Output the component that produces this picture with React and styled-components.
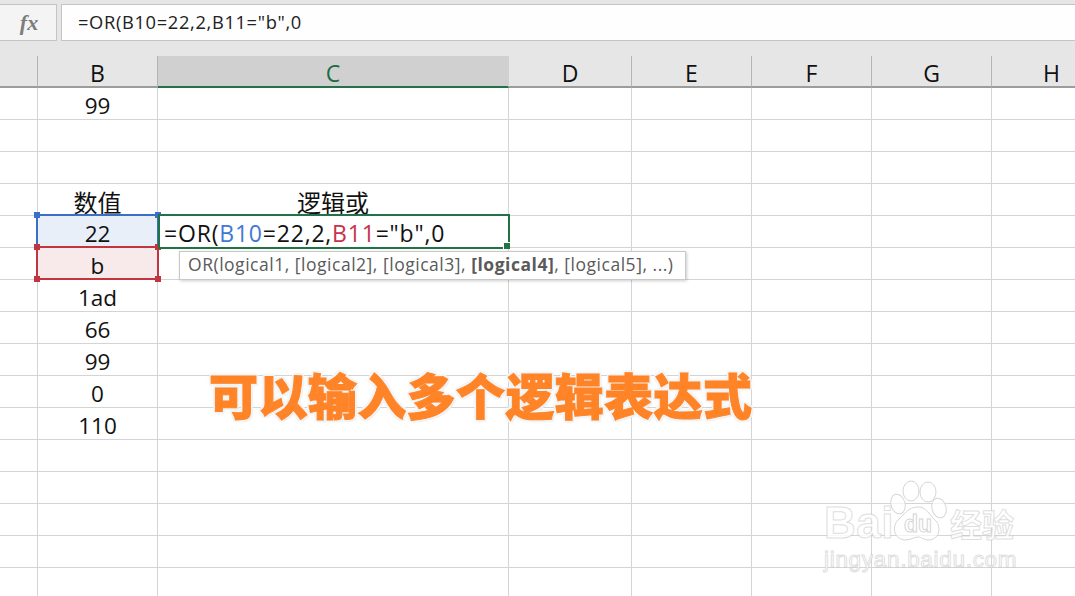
import styled, { createGlobalStyle } from 'styled-components'

const GlobalStyle = createGlobalStyle`
  html, body { margin: 0; padding: 0; background: #fff; overflow: hidden; }
  #root { width: 1075px; height: 596px; overflow: hidden; }
`

const cellFont = `"Open Sans", "Noto Sans CJK SC", sans-serif`
const cjkFont = `"Noto Sans CJK SC", sans-serif`

const Page = styled.div`
  width: 1075px;
  height: 596px;
  display: flex;
  flex-direction: column;
  overflow: hidden;
  font-family: ${cellFont};
  color: #111;
`

const FormulaBar = styled.div`
  height: 56px;
  flex: none;
  box-sizing: border-box;
  padding-top: 4px;
  display: flex;
  align-items: flex-start;
  gap: 4px;
  background: #e6e6e6;
`

const FxBox = styled.div`
  width: 57px;
  height: 37px;
  box-sizing: border-box;
  background: #f4f4f4;
  border: 1px solid #c4c4c4;
  border-left: 0;
  padding-left: 2px;
  display: flex;
  align-items: center;
  justify-content: center;
  font: italic 700 22px "Liberation Serif", serif;
  color: #7c7c7c;
`

const FormulaInput = styled.div`
  flex: 1;
  height: 37px;
  box-sizing: border-box;
  background: #fefefe;
  border: 1px solid #c4c4c4;
  border-right: 0;
  padding-left: 16px;
  line-height: 34px;
  font-size: 18.3px;
  letter-spacing: 0.66px;
  color: #222;
`

const Sheet = styled.div`
  position: relative;
  flex: 1;
  display: grid;
  grid-template-columns: 38px 120px 351px 123px 120px 120px 120px 120px;
  grid-auto-rows: 32px;
  background: #fff;
`

const Head = styled.div`
  box-sizing: border-box;
  background: ${p => (p.$active ? '#d0d0d0' : '#e6e6e6')};
  color: ${p => (p.$active ? '#1f6b45' : '#111')};
  border-bottom: ${p => (p.$active ? '2px solid #217346' : '2px solid #9c9c9c')};
  border-right: ${p => (p.$active ? '1px solid #d0d0d0' : '1px solid #b4b4b4')};
  font-size: 23px;
  line-height: 35px;
  text-align: center;
`

const Cell = styled.div`
  box-sizing: border-box;
  border-right: 1px solid #d4d4d4;
  border-bottom: 1px solid #d4d4d4;
  background: ${p => p.$fill || '#fff'};
  font-size: 22.5px;
  line-height: 35px;
  text-align: center;
  white-space: nowrap;
`

const CjkLabel = styled.span`
  font-family: ${cjkFont};
  font-size: 24px;
`

const RefBox = styled.div`
  position: absolute;
  left: 36px;
  width: 123px;
  top: ${p => p.$top}px;
  height: 34px;
  box-sizing: border-box;
  border: 2px solid ${p => p.$color};
`

const Handle = styled.i`
  position: absolute;
  width: 6px;
  height: 6px;
  background: ${p => p.$color};
  ${p => (p.$y === 'top' ? 'top: -4px;' : 'bottom: -4px;')}
  ${p => (p.$x === 'left' ? 'left: -4px;' : 'right: -4px;')}
`

const EditBox = styled.div`
  position: absolute;
  left: 158px;
  top: 158px;
  width: 352px;
  height: 35px;
  box-sizing: border-box;
  border: 2px solid #217346;
  background: #fff;
  padding-left: 4px;
  font-size: 23px;
  letter-spacing: 0.8px;
  line-height: 35px;
  white-space: nowrap;
`

const FillHandle = styled.i`
  position: absolute;
  right: -2px;
  bottom: -2px;
  width: 6px;
  height: 6px;
  background: #217346;
  border-left: 1px solid #fff;
  border-top: 1px solid #fff;
`

const Ref = styled.span`
  color: ${p => p.$color};
`

const Tooltip = styled.div`
  position: absolute;
  left: 179px;
  top: 195px;
  width: 507px;
  height: 29px;
  box-sizing: border-box;
  background: #fff;
  border: 1px solid #c8c8c8;
  box-shadow: 1px 1px 3px rgba(0, 0, 0, 0.2);
  padding-left: 8px;
  font-size: 17.5px;
  letter-spacing: 0.52px;
  line-height: 24px;
  color: #5a5a5a;
  white-space: nowrap;
`

const Caption = styled.div`
  position: absolute;
  left: 209px;
  top: 305px;
  font: 900 49px/66px ${cjkFont};
  letter-spacing: 0.4px;
  color: #ff8427;
  white-space: nowrap;
  -webkit-text-stroke: 1px #ff8427;
  text-shadow: 2px 0 0 #f4f4f4, -2px 0 0 #f4f4f4, 0 2px 0 #f4f4f4, 0 -2px 0 #f4f4f4,
    2px 2px 0 #eee, -2px 2px 0 #f4f4f4, 2px -2px 0 #f4f4f4, -2px -2px 0 #f4f4f4,
    0 0 4px rgba(0, 0, 0, 0.2);
`

const Watermark = styled.div`
  position: absolute;
  left: 824px;
  top: 424px;
  width: 196px;
  display: flex;
  flex-direction: column;
  gap: 7px;
`

const BrandRow = styled.div`
  display: flex;
  align-items: flex-end;
  height: 61px;
`

const outlined = `
  color: rgba(255, 255, 255, 0.85);
  -webkit-text-stroke: 1px rgba(200, 200, 200, 0.6);
`

const BrandLatin = styled.span`
  ${outlined}
  font: 700 44px/36px "Liberation Sans", sans-serif;
  letter-spacing: 0.5px;
`

const PawIcon = styled.svg`
  flex: none;
  width: 62px;
  height: 61px;
  margin-left: -6px;
`

const BrandCjk = styled.span`
  ${outlined}
  font: 700 32px/36px ${cjkFont};
`

const BrandUrl = styled.span`
  ${outlined}
  font: 400 22.5px/24px "Liberation Sans", sans-serif;
  letter-spacing: 0.7px;
  white-space: nowrap;
`

const columns = [
  { name: '', id: 'corner' },
  { name: 'B', id: 'b' },
  { name: 'C', id: 'c', active: true },
  { name: 'D', id: 'd' },
  { name: 'E', id: 'e' },
  { name: 'F', id: 'f' },
  { name: 'G', id: 'g' },
  { name: 'H', id: 'h' },
]

// column B and C values per sheet row, everything else is blank
const rows = [
  ['99', ''],
  ['', ''],
  ['', ''],
  [<CjkLabel>数值</CjkLabel>, <CjkLabel>逻辑或</CjkLabel>],
  ['22', ''],
  ['b', ''],
  ['1ad', ''],
  ['66', ''],
  ['99', ''],
  ['0', ''],
  ['110', ''],
  ['', ''],
  ['', ''],
  ['', ''],
  ['', ''],
  ['', ''],
]

const fills = { 4: '#e8eff9', 5: '#f8eaea' }

export default function App() {
  return (
    <>
      <GlobalStyle />
      <Page>
        <FormulaBar>
          <FxBox>fx</FxBox>
          <FormulaInput>=OR(B10=22,2,B11="b",0</FormulaInput>
        </FormulaBar>
        <Sheet>
          {columns.map(c => (
            <Head key={c.id} $active={c.active}>{c.name}</Head>
          ))}
          {rows.map((row, i) =>
            columns.map((c, j) => (
              <Cell key={`${i}-${c.id}`} $fill={j === 1 ? fills[i] : undefined}>
                {j === 1 ? row[0] : j === 2 ? row[1] : ''}
              </Cell>
            ))
          )}

          <RefBox $top={158} $color="#3a6fc6">
            <Handle $color="#3a6fc6" $x="left" $y="top" />
            <Handle $color="#3a6fc6" $x="right" $y="top" />
          </RefBox>
          <RefBox $top={190} $color="#c0353f">
            <Handle $color="#c0353f" $x="left" $y="top" />
            <Handle $color="#c0353f" $x="right" $y="top" />
            <Handle $color="#c0353f" $x="left" $y="bottom" />
            <Handle $color="#c0353f" $x="right" $y="bottom" />
          </RefBox>
          <EditBox>
            =OR(<Ref $color="#3f78d6">B10</Ref>=22,2,<Ref $color="#c8324a">B11</Ref>="b",0
            <FillHandle />
          </EditBox>
          <Tooltip>
            OR(logical1, [logical2], [logical3], <b>[logical4]</b>, [logical5], ...)
          </Tooltip>

          <Caption>可以输入多个逻辑表达式</Caption>

          <Watermark>
            <BrandRow>
              <BrandLatin>Bai</BrandLatin>
              <PawIcon viewBox="0 0 62 61" fill="rgba(255,255,255,0.7)" stroke="#d6d6d6" strokeWidth="1">
                <ellipse cx="23" cy="11" rx="8" ry="10" />
                <ellipse cx="40" cy="12" rx="8" ry="10" />
                <ellipse cx="10" cy="24" rx="7" ry="10" transform="rotate(-15 10 24)" />
                <ellipse cx="51" cy="28" rx="7" ry="10" transform="rotate(-15 51 28)" />
                <path d="M30 27c9 0 11 8 17 13 6 5 6 19-6 20-6 0-7-3-11-3s-7 3-13 3c-12-1-13-14-7-20 6-5 10-13 20-13z" />
                <text x="30" y="52" textAnchor="middle" fontFamily="Liberation Sans, sans-serif" fontWeight="700" fontSize="23">du</text>
              </PawIcon>
              <BrandCjk>经验</BrandCjk>
            </BrandRow>
            <BrandUrl>jingyan.baidu.com</BrandUrl>
          </Watermark>
        </Sheet>
      </Page>
    </>
  )
}
